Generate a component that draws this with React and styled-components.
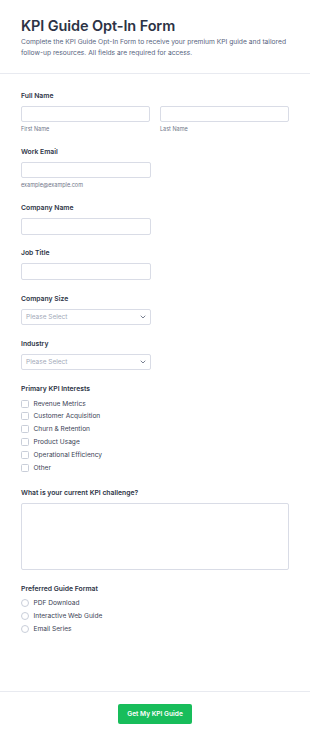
import styled, { createGlobalStyle } from "styled-components";

const GlobalStyle = createGlobalStyle`
  * { box-sizing: border-box; }
  body {
    margin: 0;
    background: #ffffff;
    font-family: Inter, "Liberation Sans", sans-serif;
    color: #2c3345;
  }
`;

const kpiOptions = [
  "Revenue Metrics",
  "Customer Acquisition",
  "Churn & Retention",
  "Product Usage",
  "Operational Efficiency",
  "Other",
];

const formatOptions = ["PDF Download", "Interactive Web Guide", "Email Series"];

function Chevron() {
  return (
    <svg width="6" height="4" viewBox="0 0 6 4" fill="none">
      <path d="M1 1l2 2 2-2" stroke="#6b7385" strokeWidth="0.9" strokeLinecap="round" strokeLinejoin="round" />
    </svg>
  );
}

function App() {
  return (
    <Page>
      <GlobalStyle />
      <Header>
        <Title>KPI Guide Opt-In Form</Title>
        <Description>
          <Line>Complete the KPI Guide Opt-In Form to receive your premium KPI guide and tailored</Line>
          <Line>follow-up resources. All fields are required for access.</Line>
        </Description>
      </Header>

      <Form>
        <Field>
          <Label>Full Name</Label>
          <Row>
            <Column>
              <Input $full />
              <SubLabel>First Name</SubLabel>
            </Column>
            <Column>
              <Input $full />
              <SubLabel>Last Name</SubLabel>
            </Column>
          </Row>
        </Field>

        <Field>
          <Label>Work Email</Label>
          <Input />
          <SubLabel>example@example.com</SubLabel>
        </Field>

        <Field>
          <Label>Company Name</Label>
          <Input />
        </Field>

        <Field>
          <Label>Job Title</Label>
          <Input />
        </Field>

        <Field>
          <Label>Company Size</Label>
          <Select>
            <span>Please Select</span>
            <Chevron />
          </Select>
        </Field>

        <Field>
          <Label>Industry</Label>
          <Select>
            <span>Please Select</span>
            <Chevron />
          </Select>
        </Field>

        <Field>
          <Label $tight>Primary KPI Interests</Label>
          <OptionList>
            {kpiOptions.map((opt) => (
              <Option key={opt}>
                <Box />
                <span>{opt}</span>
              </Option>
            ))}
          </OptionList>
        </Field>

        <Field>
          <Label>What is your current KPI challenge?</Label>
          <TextArea />
        </Field>

        <Field>
          <Label $tight>Preferred Guide Format</Label>
          <OptionList>
            {formatOptions.map((opt) => (
              <Option key={opt}>
                <Box $round />
                <span>{opt}</span>
              </Option>
            ))}
          </OptionList>
        </Field>
      </Form>

      <Footer>
        <SubmitButton>Get My KPI Guide</SubmitButton>
      </Footer>
    </Page>
  );
}

export default App;

const Page = styled.div`
  width: 310px;
  min-height: 740px;
  background: #ffffff;
`;

const Header = styled.header`
  padding: 17px 21px 14px;
  border-bottom: 1px solid #e8eaf0;
`;

const Title = styled.h1`
  margin: 0;
  font-size: 14.5px;
  line-height: 18px;
  font-weight: 600;
  color: #2c3345;
  letter-spacing: -0.1px;
`;

const Description = styled.p`
  margin: 2px 0 0;
  font-size: 6.7px;
  line-height: 11px;
  color: #57647e;
`;

const Line = styled.span`
  display: block;
  white-space: nowrap;
`;

const Form = styled.form`
  display: flex;
  flex-direction: column;
  gap: 13.8px;
  padding: 16.5px 21px 56px;
`;

const Field = styled.div`
  display: flex;
  flex-direction: column;
`;

const Label = styled.label`
  font-size: 6.8px;
  line-height: 10px;
  font-weight: 600;
  color: #2c3345;
  margin-bottom: ${(p) => (p.$tight ? "3px" : "5px")};
`;

const Row = styled.div`
  display: flex;
  gap: 10px;
`;

const Column = styled.div`
  flex: 1;
  display: flex;
  flex-direction: column;
`;

const Input = styled.div`
  width: ${(p) => (p.$full ? "100%" : "130px")};
  height: 16.5px;
  border: 1px solid #d9dce6;
  border-radius: 2px;
  background: #ffffff;
`;

const SubLabel = styled.span`
  margin-top: 3px;
  font-size: 5.5px;
  line-height: 8px;
  color: #6f7688;
`;

const Select = styled.div`
  width: 130px;
  height: 16.5px;
  border: 1px solid #d9dce6;
  border-radius: 2px;
  display: flex;
  align-items: center;
  justify-content: space-between;
  padding: 0 4px 0 4px;
  font-size: 6.5px;
  color: #a3a9b8;
`;

const OptionList = styled.div`
  display: flex;
  flex-direction: column;
`;

const Option = styled.div`
  display: flex;
  align-items: center;
  gap: 4.5px;
  height: 12.8px;
  font-size: 6.6px;
  color: #3b4255;
`;

const Box = styled.span`
  width: 8px;
  height: 8px;
  border: 1px solid #c9ced9;
  border-radius: ${(p) => (p.$round ? "50%" : "1.5px")};
  background: #ffffff;
  flex-shrink: 0;
`;

const TextArea = styled.div`
  width: 100%;
  height: 67px;
  border: 1px solid #d9dce6;
  border-radius: 2px;
  background: #ffffff;
`;

const Footer = styled.footer`
  border-top: 1px solid #e8eaf0;
  padding: 12px 0 17px;
  display: flex;
  justify-content: center;
`;

const SubmitButton = styled.button`
  width: 74px;
  height: 20px;
  border: none;
  border-radius: 2px;
  background: #18bd5b;
  color: #ffffff;
  font-family: Inter, "Liberation Sans", sans-serif;
  font-size: 6.6px;
  font-weight: 600;
  cursor: pointer;
`;
